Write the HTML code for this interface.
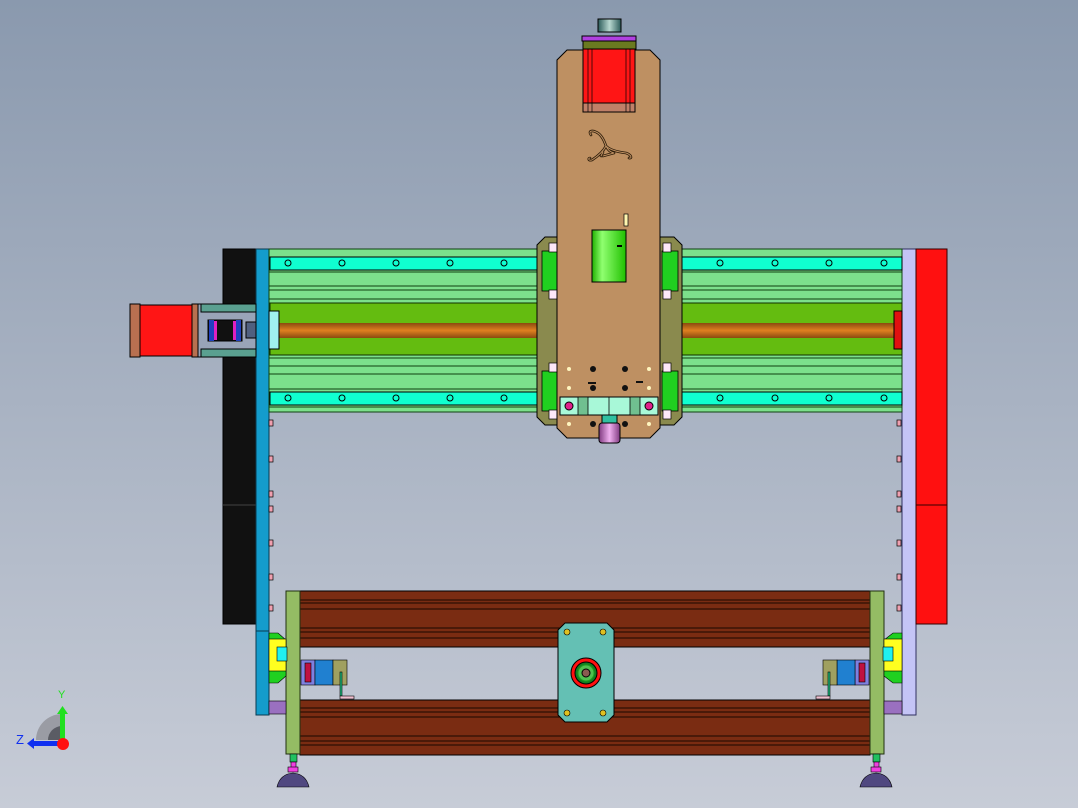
<!DOCTYPE html>
<html><head><meta charset="utf-8"><style>
html,body{margin:0;padding:0}
body{width:1078px;height:808px;overflow:hidden;background:linear-gradient(#8a99ae,#c6cbd6);font-family:"Liberation Sans",sans-serif}
svg{display:block}
</style></head><body>
<svg width="1078" height="808" viewBox="0 0 1078 808" xmlns="http://www.w3.org/2000/svg">
<defs>
<linearGradient id="bg" x1="0" y1="0" x2="0" y2="1"><stop offset="0" stop-color="#8a99ae"/><stop offset="1" stop-color="#c7ccd7"/></linearGradient>
<linearGradient id="rod" x1="0" y1="0" x2="0" y2="1"><stop offset="0" stop-color="#8a4a10"/><stop offset=".5" stop-color="#e08020"/><stop offset="1" stop-color="#8a4a10"/></linearGradient>
<linearGradient id="cyl" x1="0" y1="0" x2="1" y2="0"><stop offset="0" stop-color="#20b000"/><stop offset=".3" stop-color="#90ff70"/><stop offset="1" stop-color="#20c000"/></linearGradient>
<linearGradient id="cap" x1="0" y1="0" x2="1" y2="0"><stop offset="0" stop-color="#2a5a58"/><stop offset=".5" stop-color="#b8d8d0"/><stop offset="1" stop-color="#2a5a58"/></linearGradient>
<linearGradient id="noz" x1="0" y1="0" x2="1" y2="0"><stop offset="0" stop-color="#803a80"/><stop offset=".5" stop-color="#f0b0f0"/><stop offset="1" stop-color="#803a80"/></linearGradient>
</defs>
<rect width="1078" height="808" fill="url(#bg)"/>

<rect x="223" y="249" width="33" height="375" fill="#111" stroke="#000"/>
<line x1="223" y1="505" x2="256" y2="505" stroke="#444"/>
<rect x="256" y="249" width="13" height="466" fill="#149ccc" stroke="#0a3a50"/>
<line x1="256" y1="631" x2="269" y2="631" stroke="#0a3a50"/>
<rect x="902" y="249" width="14" height="466" fill="#c4c4f6" stroke="#303060"/>
<rect x="916" y="249" width="31" height="375" fill="#ff1010" stroke="#300"/>
<line x1="916" y1="505" x2="947" y2="505" stroke="#300"/>

<g fill="#f0a0b0" stroke="#000" stroke-width=".7">
<rect x="269" y="420" width="4" height="6"/><rect x="269" y="456" width="4" height="6"/><rect x="269" y="491" width="4" height="6"/><rect x="269" y="506" width="4" height="6"/><rect x="269" y="540" width="4" height="6"/><rect x="269" y="574" width="4" height="6"/><rect x="269" y="605" width="4" height="6"/>
<rect x="897" y="420" width="4" height="6"/><rect x="897" y="456" width="4" height="6"/><rect x="897" y="491" width="4" height="6"/><rect x="897" y="506" width="4" height="6"/><rect x="897" y="540" width="4" height="6"/><rect x="897" y="574" width="4" height="6"/><rect x="897" y="605" width="4" height="6"/>
</g>

<rect x="269" y="249" width="633" height="163" fill="#7ce08c" stroke="#104010"/>
<rect x="270" y="257" width="632" height="13" fill="#10ffd0" stroke="#000"/>
<rect x="270" y="392" width="632" height="13" fill="#10ffd0" stroke="#000"/>
<g stroke="#104010" stroke-width="1"><line x1="269" y1="272" x2="902" y2="272"/><line x1="269" y1="286" x2="902" y2="286"/><line x1="269" y1="290" x2="902" y2="290"/><line x1="269" y1="299" x2="902" y2="299"/><line x1="269" y1="358" x2="902" y2="358"/><line x1="269" y1="366" x2="902" y2="366"/><line x1="269" y1="374" x2="902" y2="374"/><line x1="269" y1="389" x2="902" y2="389"/><line x1="269" y1="407" x2="902" y2="407"/></g>
<rect x="270" y="303" width="632" height="52" fill="#64bc10" stroke="#103000"/>
<rect x="270" y="323" width="632" height="15" fill="url(#rod)"/>
<g fill="none" stroke="#000" stroke-width="1">
<circle cx="288" cy="263" r="3"/><circle cx="342" cy="263" r="3"/><circle cx="396" cy="263" r="3"/><circle cx="450" cy="263" r="3"/><circle cx="504" cy="263" r="3"/>
<circle cx="720" cy="263" r="3"/><circle cx="775" cy="263" r="3"/><circle cx="829" cy="263" r="3"/><circle cx="884" cy="263" r="3"/>
<circle cx="288" cy="398" r="3"/><circle cx="342" cy="398" r="3"/><circle cx="396" cy="398" r="3"/><circle cx="450" cy="398" r="3"/><circle cx="504" cy="398" r="3"/>
<circle cx="720" cy="398" r="3"/><circle cx="775" cy="398" r="3"/><circle cx="829" cy="398" r="3"/><circle cx="884" cy="398" r="3"/>
</g>
<rect x="269" y="311" width="10" height="38" fill="#a0f0f0" stroke="#000"/>
<rect x="894" y="311" width="8" height="38" fill="#e01010" stroke="#000"/>

<rect x="130" y="304" width="10" height="53" fill="#b87050" stroke="#000"/>
<rect x="140" y="305" width="52" height="51" fill="#ff1515" stroke="#000"/>
<rect x="192" y="304" width="6" height="53" fill="#b87050" stroke="#000"/>
<rect x="198" y="304" width="58" height="53" fill="#99a4b8" stroke="#000"/>
<rect x="201" y="304" width="55" height="8" fill="#5aa090" stroke="#000"/>
<rect x="201" y="349" width="55" height="8" fill="#5aa090" stroke="#000"/>
<rect x="208" y="320" width="34" height="21" fill="#111" stroke="#000"/>
<rect x="209" y="320" width="5" height="21" fill="#2040c0"/><rect x="214" y="321" width="3" height="19" fill="#e020c0"/><rect x="233" y="321" width="3" height="19" fill="#e020c0"/><rect x="236" y="320" width="5" height="21" fill="#2040c0"/>
<rect x="246" y="322" width="10" height="16" fill="#506080" stroke="#000"/>

<path d="M545 237 H674 L682 245 V417 L674 425 H545 L537 417 V245 Z" fill="#8a8a4e" stroke="#000"/>
<g fill="#20d020" stroke="#000" stroke-width=".8">
<rect x="542" y="251" width="16" height="40"/><rect x="662" y="251" width="16" height="40"/>
<rect x="542" y="371" width="16" height="40"/><rect x="662" y="371" width="16" height="40"/>
</g>
<g fill="#fde8f8" stroke="#000" stroke-width=".7">
<rect x="549" y="243" width="8" height="9"/><rect x="549" y="290" width="8" height="9"/><rect x="663" y="243" width="8" height="9"/><rect x="663" y="290" width="8" height="9"/>
<rect x="549" y="363" width="8" height="9"/><rect x="549" y="410" width="8" height="9"/><rect x="663" y="363" width="8" height="9"/><rect x="663" y="410" width="8" height="9"/>
</g>
<path d="M567 50 H650 L660 60 V428 L650 438 H567 L557 428 V60 Z" fill="#be9062" stroke="#000"/>
<rect x="583" y="41" width="53" height="8" fill="#6a7a20" stroke="#000"/>
<rect x="582" y="36" width="54" height="5" fill="#b040e0" stroke="#000"/>
<rect x="598" y="19" width="23" height="13" fill="url(#cap)" stroke="#000"/>
<rect x="583" y="49" width="52" height="63" fill="#ff1515" stroke="#000"/>
<rect x="583" y="103" width="52" height="9" fill="#c08068" stroke="#000"/>
<g stroke="#000" stroke-width=".7"><line x1="588" y1="49" x2="588" y2="112"/><line x1="592" y1="49" x2="592" y2="112"/><line x1="626" y1="49" x2="626" y2="112"/><line x1="630" y1="49" x2="630" y2="112"/></g>
<!-- logo -->
<g fill="none" stroke-linecap="round" stroke-linejoin="round">
<path d="M591 135 C588 131 592 130 596 132 C601 134 604 140 606 146 C610 150 618 152 626 153 C632 155 632 159 629 158 M606 146 C603 152 598 156 592 160 C588 161 588 158 590 158 M606 146 C608 150 610 152 614 153 M603 152 L601 156 M614 153 L603 156" stroke="#2a1a08" stroke-width="2.6"/>
<path d="M591 135 C588 131 592 130 596 132 C601 134 604 140 606 146 C610 150 618 152 626 153 C632 155 632 159 629 158 M606 146 C603 152 598 156 592 160 C588 161 588 158 590 158 M606 146 C608 150 610 152 614 153 M603 152 L601 156 M614 153 L603 156" stroke="#be9062" stroke-width="1"/>
</g>
<rect x="624" y="214" width="4" height="12" fill="#fff6b0" stroke="#000" stroke-width=".7"/>
<rect x="592" y="230" width="34" height="52" fill="url(#cyl)" stroke="#000"/>
<rect x="617" y="245" width="5" height="2" fill="#000"/>
<g fill="#111"><circle cx="593" cy="369" r="3"/><circle cx="625" cy="369" r="3"/><circle cx="593" cy="388" r="3"/><circle cx="625" cy="388" r="3"/><circle cx="593" cy="424" r="3"/><circle cx="625" cy="424" r="3"/></g>
<rect x="588" y="382" width="8" height="2" fill="#111"/><rect x="636" y="381" width="7" height="2" fill="#111"/>
<g fill="#fff6c0"><circle cx="569" cy="369" r="2"/><circle cx="649" cy="369" r="2"/><circle cx="569" cy="388" r="2"/><circle cx="649" cy="388" r="2"/><circle cx="569" cy="424" r="2"/><circle cx="649" cy="424" r="2"/></g>
<rect x="560" y="397" width="98" height="18" fill="#a8f8d8" stroke="#000"/>
<rect x="578" y="397" width="10" height="18" fill="#70c090" stroke="#000" stroke-width=".8"/>
<rect x="630" y="397" width="10" height="18" fill="#70c090" stroke="#000" stroke-width=".8"/>
<line x1="609" y1="397" x2="609" y2="415" stroke="#000" stroke-width=".8"/>
<circle cx="569" cy="406" r="4" fill="#e0208a" stroke="#000"/><circle cx="649" cy="406" r="4" fill="#e0208a" stroke="#000"/>
<rect x="602" y="415" width="15" height="8" fill="#30c0a0" stroke="#000"/>
<rect x="599" y="423" width="21" height="20" rx="3" fill="url(#noz)" stroke="#000"/>

<rect x="300" y="591" width="570" height="56" fill="#7a2c12" stroke="#000"/>
<g stroke="#1a0800" stroke-width="1"><line x1="300" y1="600" x2="870" y2="600"/><line x1="300" y1="603" x2="870" y2="603"/><line x1="300" y1="609" x2="870" y2="609"/><line x1="300" y1="628" x2="870" y2="628"/><line x1="300" y1="632" x2="870" y2="632"/><line x1="300" y1="638" x2="870" y2="638"/></g>
<rect x="300" y="700" width="570" height="55" fill="#7a2c12" stroke="#000"/>
<g stroke="#1a0800" stroke-width="1"><line x1="300" y1="708" x2="870" y2="708"/><line x1="300" y1="712" x2="870" y2="712"/><line x1="300" y1="717" x2="870" y2="717"/><line x1="300" y1="736" x2="870" y2="736"/><line x1="300" y1="741" x2="870" y2="741"/><line x1="300" y1="745" x2="870" y2="745"/></g>
<rect x="286" y="591" width="14" height="163" fill="#94bc64" stroke="#203010"/>
<rect x="870" y="591" width="14" height="163" fill="#94bc64" stroke="#203010"/>
<rect x="269" y="701" width="17" height="13" fill="#9a70c0" stroke="#000" stroke-width=".6"/>
<rect x="884" y="701" width="18" height="13" fill="#9a70c0" stroke="#000" stroke-width=".6"/>
<path d="M269 633 H278 L286 640 V676 L278 683 H269 Z" fill="#20d020" stroke="#000" stroke-width=".6"/>
<rect x="269" y="639" width="17" height="32" fill="#ffff20" stroke="#000" stroke-width=".6"/>
<rect x="277" y="647" width="10" height="14" fill="#20f0f0" stroke="#000" stroke-width=".6"/>
<path d="M902 633 H893 L884 640 V676 L893 683 H902 Z" fill="#20d020" stroke="#000" stroke-width=".6"/>
<rect x="884" y="639" width="18" height="32" fill="#ffff20" stroke="#000" stroke-width=".6"/>
<rect x="883" y="647" width="10" height="14" fill="#20f0f0" stroke="#000" stroke-width=".6"/>
<g stroke="#000" stroke-width=".6">
<rect x="301" y="660" width="14" height="25" fill="#8080e0"/><rect x="305" y="663" width="6" height="19" fill="#c01040"/>
<rect x="315" y="660" width="18" height="25" fill="#2080d0"/><rect x="333" y="660" width="14" height="25" fill="#a0a060"/>
<rect x="340" y="672" width="2" height="24" fill="#20c080"/><rect x="340" y="696" width="14" height="3" fill="#f0c0d0"/>
<rect x="855" y="660" width="14" height="25" fill="#8080e0"/><rect x="859" y="663" width="6" height="19" fill="#c01040"/>
<rect x="837" y="660" width="18" height="25" fill="#2080d0"/><rect x="823" y="660" width="14" height="25" fill="#a0a060"/>
<rect x="828" y="672" width="2" height="24" fill="#20c080"/><rect x="816" y="696" width="14" height="3" fill="#f0c0d0"/>
</g>
<path d="M565 623 H607 L614 630 V715 L607 722 H565 L558 715 V630 Z" fill="#64c0b4" stroke="#000"/>
<circle cx="586" cy="673" r="15" fill="#ff1010" stroke="#000"/>
<circle cx="586" cy="673" r="11" fill="#108020" stroke="#000"/>
<circle cx="586" cy="673" r="8" fill="#50c050" stroke="#20a020"/>
<circle cx="586" cy="673" r="4" fill="#8a5a50" stroke="#000"/>
<g fill="#e0c020" stroke="#000" stroke-width=".6"><circle cx="567" cy="632" r="3"/><circle cx="603" cy="632" r="3"/><circle cx="567" cy="713" r="3"/><circle cx="603" cy="713" r="3"/></g>
<g stroke="#000" stroke-width=".6">
<rect x="290" y="754" width="7" height="8" fill="#20c060"/><rect x="291" y="762" width="5" height="6" fill="#f040e0"/><rect x="288" y="767" width="10" height="5" fill="#f040e0"/>
<path d="M277 787 Q280 774 293 773 Q306 774 309 787 Z" fill="#504880"/>
<rect x="873" y="754" width="7" height="8" fill="#20c060"/><rect x="874" y="762" width="5" height="6" fill="#f040e0"/><rect x="871" y="767" width="10" height="5" fill="#f040e0"/>
<path d="M860 787 Q863 774 876 773 Q889 774 892 787 Z" fill="#504880"/>
</g>
<path d="M36 740 A26 26 0 0 1 62 714 V740 Z" fill="#9a9ca4"/>
<path d="M48 740 A14 14 0 0 1 62 726 V740 Z" fill="#5a5c64"/>
<rect x="60" y="713" width="5" height="26" fill="#20e020"/><path d="M57 714 L62.5 706 L68 714 Z" fill="#20e020"/>
<rect x="32" y="741" width="30" height="5" fill="#1030f0"/><path d="M34 738 L27 743.5 L34 749 Z" fill="#1030f0"/>
<circle cx="63" cy="744" r="6" fill="#ff1010"/>
<text x="58" y="698" font-size="11" fill="#20e020">Y</text>
<text x="16" y="744" font-size="13" fill="#1030f0">Z</text>
</svg>
</body></html>
